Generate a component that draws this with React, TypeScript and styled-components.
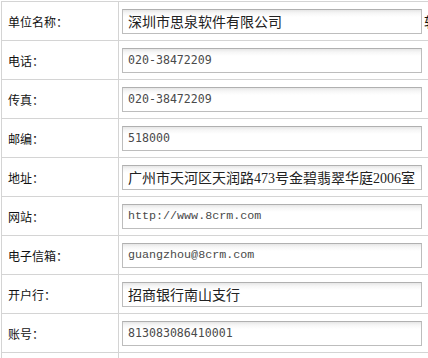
import React from 'react'
import styled, { createGlobalStyle } from 'styled-components'

const GlobalStyle = createGlobalStyle`
    html, body {
        margin: 0;
        padding: 0;
        background: #fff;
        overflow: hidden;
    }
`

type Field = {
    label: string
    value: string
    kind: 'cjk' | 'digits' | 'mono' | 'mixed'
    after?: string
}

const fields: Field[] = [
    { label: '单位名称：', value: '深圳市思泉软件有限公司', kind: 'cjk', after: '软件' },
    { label: '电话：', value: '020-38472209', kind: 'digits' },
    { label: '传真：', value: '020-38472209', kind: 'digits' },
    { label: '邮编：', value: '518000', kind: 'digits' },
    { label: '地址：', value: '广州市天河区天润路473号金碧翡翠华庭2006室', kind: 'mixed' },
    { label: '网站：', value: 'http://www.8crm.com', kind: 'mono' },
    { label: '电子信箱：', value: 'guangzhou@8crm.com', kind: 'mono' },
    { label: '开户行：', value: '招商银行南山支行', kind: 'cjk' },
    { label: '账号：', value: '813083086410001', kind: 'digits' },
]

export default function App() {
    return (
        <>
            <GlobalStyle />
            <Form>
                {fields.map(field => (
                    <Row key={field.label}>
                        <Label>{field.label}</Label>
                        <ValueCell>
                            <TextBox $kind={field.kind} value={field.value} readOnly />
                            {field.after && <After>{field.after}</After>}
                        </ValueCell>
                    </Row>
                ))}
                <Row>
                    <Label />
                    <ValueCell />
                </Row>
            </Form>
        </>
    )
}

const Form = styled.div`
    width: 640px;
    margin-top: 1px;
    margin-left: 1px;
    border-top: 1px solid #d4d4d4;
    border-left: 1px solid #d4d4d4;
    font-family: 'Noto Sans CJK SC', sans-serif;
`

const Row = styled.div`
    display: grid;
    grid-template-columns: 117px 1fr;
    height: 39px;
    box-sizing: border-box;
    border-bottom: 1px solid #d4d4d4;
`

const Label = styled.div`
    display: flex;
    align-items: center;
    padding-left: 6px;
    border-right: 1px solid #d4d4d4;
    font-size: 12px;
    color: #111;
    white-space: nowrap;
`

const ValueCell = styled.div`
    display: flex;
    align-items: center;
    padding-left: 3px;
`

const fontFor = {
    cjk: `font-family: 'Noto Sans CJK SC', sans-serif; font-size: 14px; color: #222;`,
    mixed: `font-family: 'Liberation Serif', 'Noto Sans CJK SC', serif; font-size: 14px; color: #222;`,
    digits: `font-family: 'DejaVu Sans Mono', monospace; font-size: 11.6px; color: #4a4a4a;`,
    mono: `font-family: 'Liberation Mono', monospace; font-size: 11.7px; color: #4a4a4a;`,
}

const TextBox = styled.input<{ $kind: Field['kind'] }>`
    box-sizing: border-box;
    width: 300px;
    height: 25px;
    margin: 0;
    padding: 0 0 0 5px;
    border: 1px solid #bdbdbd;
    border-top-color: #b0b0b0;
    border-radius: 0;
    background: linear-gradient(#e6e6e6 0, #f6f6f6 3px, #ffffff 7px);
    outline: none;
    ${({ $kind }) => fontFor[$kind]}
`

const After = styled.span`
    margin-left: 2px;
    font-size: 14px;
    color: #111;
    white-space: nowrap;
`
